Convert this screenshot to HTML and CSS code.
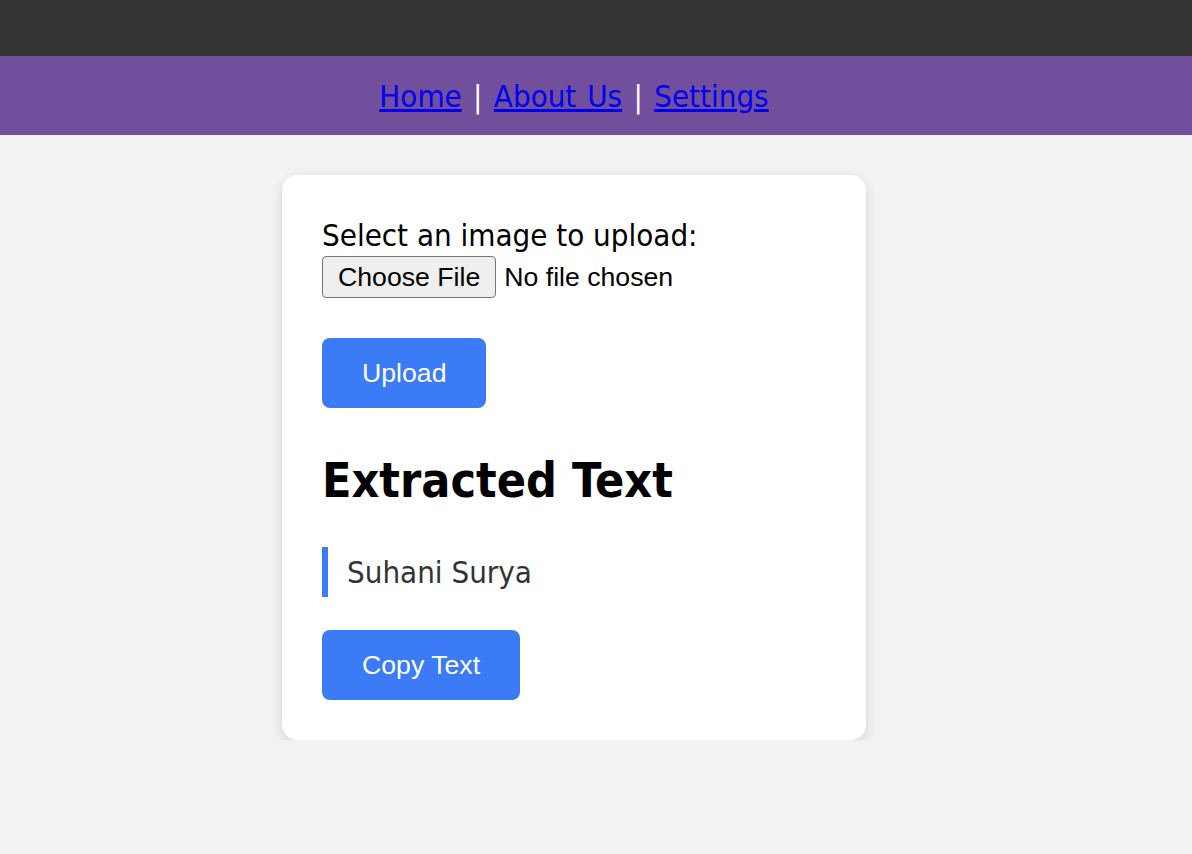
FILE: index.html
```html
<!DOCTYPE html>
<html lang="en">
<head>
<meta charset="utf-8">
<title>Image Text Extractor</title>
<link rel="stylesheet" href="styles.css">
</head>
<body>
<header class="topbar"></header>
<nav class="nav">
  <div class="nav-inner">
    <a href="#">Home</a> | <a href="#">About Us</a> | <a href="#">Settings</a>
  </div>
</nav>
<main class="main">
  <section class="card">
    <form class="upload-form">
      <label class="file-label" for="file">Select an image to upload:</label>
      <input class="file-input" type="file" id="file" name="file">
      <button type="button" class="btn btn-upload">Upload</button>
    </form>
    <h2 class="heading">Extracted Text</h2>
    <blockquote class="result">Suhani Surya</blockquote>
    <button type="button" class="btn btn-copy">Copy Text</button>
  </section>
</main>
</body>
</html>
```
FILE: styles.css
```css
html, body {
  margin: 0;
  padding: 0;
}
body {
  background: #f2f2f2;
  font-family: "DejaVu Sans Condensed", "DejaVu Sans", sans-serif;
  font-size: 31px;
  color: #000;
}
.topbar {
  height: 56px;
  background: #333333;
}
.nav {
  background: #714f9d;
  height: 79px;
}
.nav-inner {
  width: 1148px;
  text-align: center;
  line-height: 81px;
  color: #ffffff;
  font-size: 31px;
  word-spacing: 2.5px;
}
.nav-inner a {
  color: #0000ee;
  text-decoration: underline;
  word-spacing: 2px;
}
.main {
  width: 1148px;
  display: flex;
  justify-content: center;
  padding-top: 40px;
}
.card {
  width: 584px;
  box-sizing: border-box;
  background: #ffffff;
  border-radius: 15px;
  padding: 40px;
  box-shadow: 0 4px 12px rgba(0, 0, 0, 0.12);
  display: flex;
  flex-direction: column;
  align-items: flex-start;
}
.upload-form {
  display: flex;
  flex-direction: column;
  align-items: flex-start;
}
.file-label {
  display: block;
  line-height: 41px;
}
.file-input {
  font-family: "Liberation Sans", Arial, sans-serif;
  font-size: 26.67px;
  height: 42px;
  width: 380px;
  color: #000;
}
.file-input::file-selector-button {
  font-family: inherit;
  font-size: inherit;
  height: 42px;
  padding: 0 15px;
  margin-right: 8px;
  border: 1px solid #767676;
  border-radius: 4px;
  background: #efefef;
  color: #000;
}
.btn {
  font-family: "Liberation Sans", Arial, sans-serif;
  font-size: 26.67px;
  line-height: 30px;
  padding: 20px 40px;
  background: #3b7bf5;
  color: #ffffff;
  border: none;
  border-radius: 8px;
}
.btn-upload {
  margin-top: 40px;
}
.heading {
  font-size: 48px;
  font-weight: bold;
  line-height: 56px;
  margin: 44px 0 0;
}
.result {
  margin: 39px 0 0;
  border-left: 6px solid #3b7bf5;
  padding-left: 19px;
  line-height: 50px;
  color: #333333;
  font-size: 31px;
}
.btn-copy {
  margin-top: 33px;
}
```
